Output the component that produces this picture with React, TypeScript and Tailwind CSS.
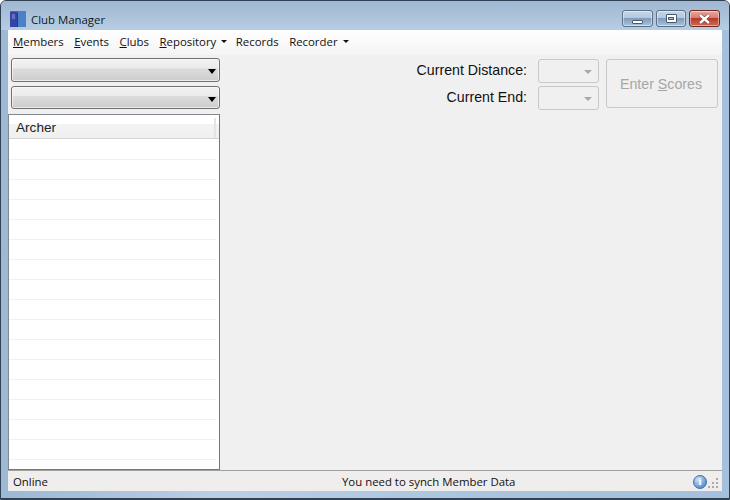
import React from 'react';

const MENU_ITEMS = [
  { before: '', key: 'M', after: 'embers', caret: false },
  { before: '', key: 'E', after: 'vents', caret: false },
  { before: '', key: 'C', after: 'lubs', caret: false },
  { before: '', key: 'R', after: 'epository', caret: true },
  { before: 'Records', key: '', after: '', caret: false },
  { before: 'Recorder', key: '', after: '', caret: true },
];

const ROWS = Array.from({ length: 17 });

function DarkCombo({ height }: { height: string }) {
  return (
    <div className={`relative w-[209px] rounded-[3px] border border-[#707070] bg-[linear-gradient(#f2f2f2_0%,#ebebeb_42%,#dcdcdc_44%,#cdcdcd_100%)] shadow-[inset_0_0_0_1px_rgba(255,255,255,0.6)] ${height}`}>
      <span className="absolute right-[3px] top-[10px] h-0 w-0 border-x-[4px] border-t-[5px] border-x-transparent border-t-black" />
    </div>
  );
}

function SmallCombo() {
  return (
    <div className="relative h-[24px] w-[61px] rounded-[3px] border border-[#c8c8c8] bg-[#f0f0f0]">
      <span className="absolute right-[6px] top-[10px] h-0 w-0 border-x-[4px] border-t-[4px] border-x-transparent border-t-[#a8a8a8]" />
    </div>
  );
}

function CaptionButton({ className, children }: { className: string; children: React.ReactNode }) {
  return (
    <div className={`flex h-[17px] items-center justify-center rounded-[3px] border border-[#5b6f86] shadow-[inset_0_0_0_1px_rgba(255,255,255,0.45)] ${className}`}>
      {children}
    </div>
  );
}

export default function App() {
  return (
    <div className="flex h-[500px] w-[730px] flex-col overflow-hidden rounded-t-[6px] border border-[#2f4152] bg-[linear-gradient(90deg,#9db8d4_0%,#b9cfe5_30%,#a9c3de_70%,#a5c0dc_100%)] font-['Liberation_Sans',sans-serif]">
      {/* Title bar */}
      <div className="flex h-[29px] shrink-0 items-end bg-[linear-gradient(#9fb7d0,#b7cde3)] pb-[2px] pl-[9px] pr-[9px]">
        <svg width="16" height="16" viewBox="0 0 16 16" className="mb-[1px] shrink-0">
          <rect width="16" height="16" rx="1" fill="#3b6cb4" />
          <rect x="0" y="1" width="7" height="15" fill="#3445a8" />
          <rect x="8" y="0" width="8" height="16" fill="#4a80c6" />
          <rect x="2" y="3" width="3" height="5" fill="#6a70bd" />
          <rect x="7" y="2" width="1" height="14" fill="#2a3580" />
        </svg>
        <span className="ml-[5px] font-['Open_Sans',sans-serif] text-[11.4px] leading-[16px] text-[#10181f]">Club Manager</span>
        <div className="ml-auto mb-[1px] flex items-center gap-[3px]">
          <CaptionButton className="w-[31px] bg-[linear-gradient(#c5d6e8_0%,#b2c8df_48%,#7f9cbb_50%,#a9c3dc_100%)]">
            <span className="mt-[6px] h-[4px] w-[11px] rounded-[1px] border border-[#4a5a6c] bg-white" />
          </CaptionButton>
          <CaptionButton className="w-[30px] bg-[linear-gradient(#c5d6e8_0%,#b2c8df_48%,#7f9cbb_50%,#a9c3dc_100%)]">
            <span className="flex h-[9px] w-[11px] items-center justify-center rounded-[1px] border border-[#4a5a6c] bg-white">
              <span className="h-[3px] w-[6px] border border-[#4a5a6c] bg-[#a9c0d8]" />
            </span>
          </CaptionButton>
          <CaptionButton className="w-[31px] border-[#6e2a22] bg-[linear-gradient(#e6a79c_0%,#d77d6e_48%,#b93a28_50%,#cf6a55_100%)]">
            <svg width="13" height="10" viewBox="0 0 13 10">
              <path d="M2 1 L11 9 M11 1 L2 9" stroke="#5a3a36" strokeWidth="3.6" />
              <path d="M2 1 L11 9 M11 1 L2 9" stroke="#ffffff" strokeWidth="2.4" />
            </svg>
          </CaptionButton>
        </div>
      </div>

      {/* Client area */}
      <div className="mx-[7px] flex min-h-0 flex-1 flex-col bg-[#f0f0f0]">
        {/* Menu */}
        <div className="flex h-[25px] shrink-0 items-center gap-[10.5px] bg-[linear-gradient(#ffffff,#f4f4f4)] pb-[2px] pl-[5px] font-['Open_Sans',sans-serif] text-[11.4px] text-[#111]">
          {MENU_ITEMS.map(item => (
            <div key={item.before + item.key + item.after} className="flex items-center">
              <span>
                {item.before}
                {item.key && <span className="underline">{item.key}</span>}
                {item.after}
              </span>
              {item.caret && (
                <span className="ml-[5px] mr-[-2px] mt-[1px] h-0 w-0 border-x-[3px] border-t-[3px] border-x-transparent border-t-[#111]" />
              )}
            </div>
          ))}
        </div>

        {/* Main */}
        <div className="flex min-h-0 flex-1">
          <div className="flex w-[212px] shrink-0 flex-col">
            <div className="flex flex-col gap-[4px] pl-[3px] pt-[3px]">
              <DarkCombo height="h-[24px]" />
              <DarkCombo height="h-[23px]" />
            </div>
            <div className="mt-[5px] flex min-h-0 flex-1 flex-col overflow-hidden border border-[#828790] border-b-[#777] border-r-[#777] bg-white">
              <div className="mb-[1px] flex h-[24px] shrink-0 items-center border-b border-[#d5d5d5] bg-[linear-gradient(#ffffff_0%,#ffffff_40%,#f3f3f3_41%,#f0f0f0_100%)] pl-[7px] pt-[3px] text-[13.6px] text-[#222]">
                <span className="flex-1">Archer</span>
                <span className="mr-[3px] h-full w-[2px] bg-[#e4e4e4]" />
              </div>
              {ROWS.map((_, i) => (
                <div key={i} className="mr-[3px] h-[20px] shrink-0 border-b border-[#f0f0f0]" />
              ))}
            </div>
          </div>

          <div className="flex flex-1 justify-end pr-[4px] pt-[4px]">
            <div className="flex flex-col gap-[3px] pr-[7px]">
              <div className="flex items-center justify-end gap-[11px]">
                <span className="text-[14.2px] text-[#111]">Current Distance:</span>
                <SmallCombo />
              </div>
              <div className="flex items-center justify-end gap-[11px]">
                <span className="text-[14.2px] text-[#111]">Current End:</span>
                <SmallCombo />
              </div>
            </div>
            <div className="flex h-[49px] w-[112px] items-center justify-center rounded-[3px] border border-[#c8c8c8] pr-[2px] pt-[3px] text-[14.2px] text-[#a6a6a6]">
              <span>
                Enter <span className="underline">S</span>cores
              </span>
            </div>
          </div>
        </div>

        {/* Status bar */}
        <div className="flex h-[21px] shrink-0 items-center border-t border-[#a0a0a0] bg-[#f0eded] pl-[5px] pr-[3px] pt-[1px] font-['Open_Sans',sans-serif] text-[11.4px] text-[#111]">
          <span className="w-[329px]">Online</span>
          <span>You need to synch Member Data</span>
          <div className="ml-auto flex items-center gap-[1px]">
            <span className="flex h-[14px] w-[14px] items-center justify-center rounded-full border border-[#3d6ea8] bg-[radial-gradient(circle_at_35%_30%,#cfe3f7,#5f95d2_70%)] font-['Liberation_Serif',serif] text-[11px] font-bold leading-none text-white">
              i
            </span>
            <svg width="11" height="11" viewBox="0 0 11 11" className="mt-[3px]">
              <g fill="#a9a9a9">
                <rect x="8" y="0" width="2" height="2" />
                <rect x="4" y="4" width="2" height="2" />
                <rect x="8" y="4" width="2" height="2" />
                <rect x="0" y="8" width="2" height="2" />
                <rect x="4" y="8" width="2" height="2" />
                <rect x="8" y="8" width="2" height="2" />
              </g>
            </svg>
          </div>
        </div>
      </div>
      <div className="h-[8px] shrink-0 border-b border-[#2f4152]" />
    </div>
  );
}
